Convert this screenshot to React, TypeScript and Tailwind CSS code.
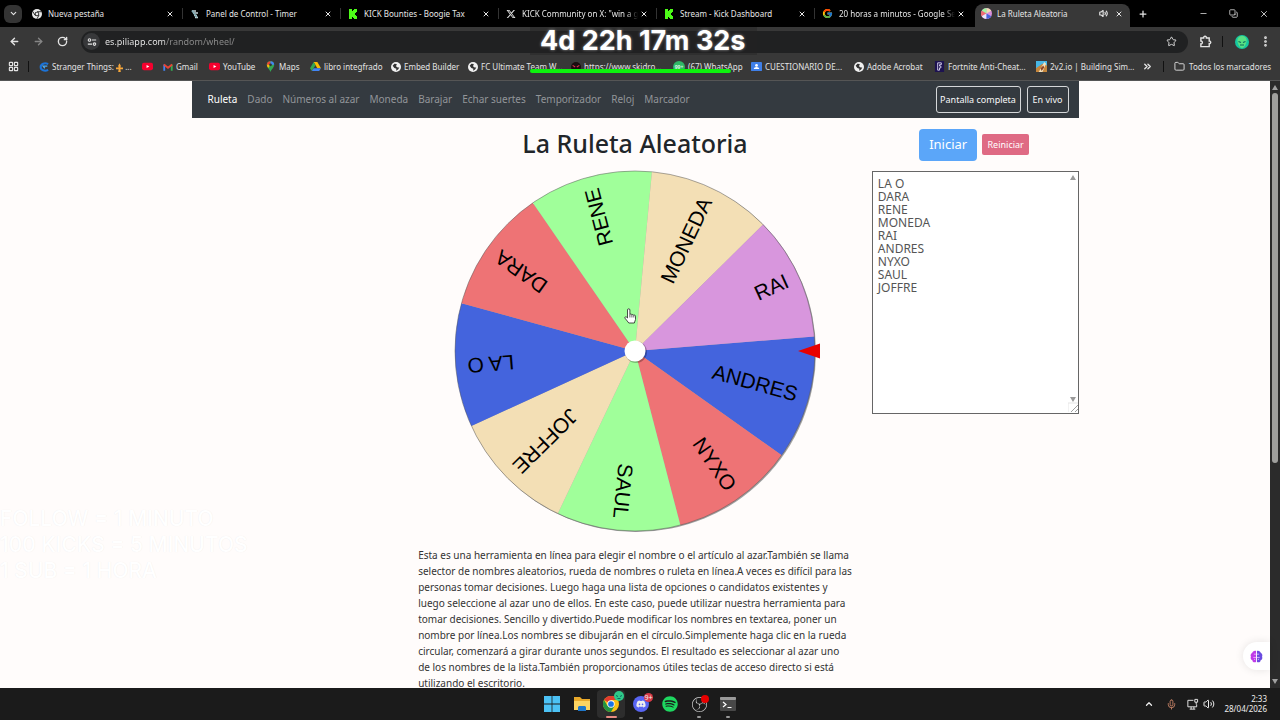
import { useState } from 'react';
import type { ReactNode } from 'react';
import clsx from 'clsx';
import {
  ArrowLeft,
  ArrowRight,
  ChevronDown,
  ChevronsRight,
  ChevronUp,
  Copy,
  EllipsisVertical,
  Folder,
  LayoutGrid,
  Mic,
  Minus,
  Plus,
  RotateCw,
  Star,
  Volume2,
  X,
} from 'lucide-react';
import { FaDiscord, FaSpotify, FaXTwitter } from 'react-icons/fa6';
import { FcGoogle } from 'react-icons/fc';
import { SiObsstudio } from 'react-icons/si';

const ChromeIcon = ({ mono = false, className }: { mono?: boolean; className?: string }) => (
  <svg viewBox="0 0 24 24" className={className}>
    <circle cx="12" cy="12" r="12" fill={mono ? '#e8e8e8' : '#fbc116'} />
    {!mono && <path d="M12 12 1.600 6A12 12 0 0 1 22.400 6H12z" fill="#e33b2e" />}
    {!mono && <path d="M1.600 6A12 12 0 0 0 12 24l5.200-9L12 12 6.800 15z" fill="#229342" />}
    {mono && <path d="M12 6.500h10.500M7.200 15 2 6M16.800 15 11.500 24" stroke="#111" strokeWidth="2" />}
    <circle cx="12" cy="12" r="5.500" fill={mono ? '#111' : '#fff'} />
    <circle cx="12" cy="12" r={mono ? 3.5 : 4.3} fill={mono ? '#e8e8e8' : '#1a73e8'} />
  </svg>
);

const KickIcon = () => (
  <svg viewBox="0 0 10 10" className="size-[10px]">
    <path d="M1 0h3v2h1V1h1V0h3v3H8v1H7v2h1v1h1v3H6V9H5V8H4v2H1z" fill="#4dfb18" />
  </svg>
);

const TimerIcon = () => (
  <svg viewBox="0 0 10 10" className="size-[10px]" fill="none">
    <path d="M2 2h4M3 4h5M4 6.500h3M5 8.500h3" stroke="#c7d6da" strokeWidth="1.600" />
    <path d="M2 1.500 7 8.500" stroke="#86aeb6" strokeWidth="1.800" />
  </svg>
);

const WheelIcon = () => (
  <svg viewBox="0 0 12 12" className="size-[11px]">
    <circle cx="6" cy="6" r="6" fill="#d98fdc" />
    <path d="M6 6V0a6 6 0 0 1 5.200 3z" fill="#f3deb3" />
    <path d="M6 6V0A6 6 0 0 0 .8 3z" fill="#a3f7a0" />
    <path d="M6 6 .8 3a6 6 0 0 0 0 6z" fill="#ee6f72" />
    <path d="M6 6 .8 9A6 6 0 0 0 6 12z" fill="#e9e9f9" />
    <path d="M6 6v6a6 6 0 0 0 5.200-3z" fill="#4464dd" />
  </svg>
);

const GlobeIcon = () => (
  <svg viewBox="0 0 12 12" className="size-[10px]">
    <circle cx="6" cy="6" r="6" fill="#f1f1f1" />
    <path d="M2 4.500 4 2l3 .5L6 5l2 1.500h2L8.500 9 6 10.500 6.500 8 4 7.200z" fill="#333" />
  </svg>
);

const YoutubeIcon = () => (
  <svg viewBox="0 0 12 12" className="size-[11px]">
    <rect y="2" width="12" height="8" rx="2" fill="#f5002e" />
    <path d="M5 4.300v3.400L8 6z" fill="#fff" />
  </svg>
);

const GmailIcon = () => (
  <svg viewBox="0 0 12 12" className="size-[10px]" fill="none" strokeWidth="2.200">
    <path d="M1.500 10.500V3" stroke="#4285f4" />
    <path d="M10.500 10.500V3" stroke="#34a853" />
    <path d="M1 3l5 4 5-4" stroke="#ea4335" />
  </svg>
);

const MapsIcon = () => (
  <svg viewBox="0 0 12 12" className="size-[11px]">
    <path d="M6 12C5 9 2 7.500 2 4.200A4 4 0 0 1 10 4.200C10 7.500 7 9 6 12z" fill="#34a853" />
    <path d="M2 4.200A4 4 0 0 1 6 .2V4z" fill="#ea4335" />
    <path d="M6 .2a4 4 0 0 1 4 4L6 4z" fill="#4285f4" />
    <path d="M2 4.200 6 4 3.500 7.600A6 6 0 0 1 2 4.200z" fill="#fbbc04" />
    <circle cx="6" cy="4.200" r="1.500" fill="#333" />
  </svg>
);

const DriveIcon = () => (
  <svg viewBox="0 0 12 12" className="size-[11px]">
    <path d="M4 1h4l4 7H8z" fill="#fbbc04" />
    <path d="M4 1l2 3.500L2 11 0 8z" fill="#34a853" />
    <path d="M4 8h8l-2 3H2z" fill="#4285f4" />
  </svg>
);

const SwirlIcon = () => (
  <svg viewBox="0 0 12 12" className="size-[10px]" fill="none" strokeWidth="2.500">
    <path d="M11 2.500C7 .5 2 2 2 6s5 5.500 9 3.500" stroke="#1b73d8" />
    <path d="M10 5H5l2 2.500" stroke="#4aa9f3" strokeWidth="1.500" />
  </svg>
);

const FleurIcon = () => (
  <svg viewBox="0 0 8 10" className="inline-block h-[9px] w-[7px]">
    <path d="M4 0l1.500 3L5 5h3v2H5l.500 3h-3L3 7H0V5h3l-.500-2z" fill="#f5a63b" />
  </svg>
);

const SkullIcon = () => (
  <svg viewBox="0 0 12 12" className="size-[10px]">
    <circle cx="6" cy="6" r="6" fill="#1a0c10" />
    <path d="M2 4l3 2M10 4 7 6M4 9h4" stroke="#d2344b" strokeWidth="1.300" />
  </svg>
);

const WhatsappIcon = () => (
  <svg viewBox="0 0 12 12" className="size-[12px]">
    <circle cx="6" cy="6" r="6" fill="#2fb866" />
    <text x="6" y="8" textAnchor="middle" fontSize="5" fontWeight="700" fill="#d9f5e3">
      99+
    </text>
  </svg>
);

const ClassroomIcon = () => (
  <svg viewBox="0 0 12 12" className="size-[11px]">
    <rect y="1" width="12" height="10" rx="1" fill="#3f7fe8" />
    <circle cx="6" cy="4.800" r="1.500" fill="#fff" />
    <path d="M3 8.800c0-3 6-3 6 0z" fill="#fff" />
  </svg>
);

const FortniteIcon = () => (
  <svg viewBox="0 0 12 12" className="size-[11px]">
    <rect x="1" width="10" height="12" fill="#1d1250" />
    <path d="M4 2h4v2H6v1.500h1.500v2H6V10H4z" fill="none" stroke="#e9e4ff" strokeWidth=".9" />
  </svg>
);

const BuildIcon = () => (
  <svg viewBox="0 0 12 12" className="size-[11px]">
    <rect width="12" height="12" fill="#48b7e6" />
    <path d="M0 12V8l7-5 5 2v7z" fill="#c5863c" />
    <path d="M3 12 9 1l2 2-4 9z" fill="#f3e3c0" />
    <path d="M5 8l3-3 1 2-3 4z" fill="#8c4426" />
  </svg>
);

const SiteIcon = () => (
  <svg viewBox="0 0 12 12" className="size-[10px]" fill="none" stroke="#e3e3e3" strokeWidth="1.300">
    <circle cx="3" cy="3.500" r="1.500" />
    <path d="M6 3.500h5M1 8.500h5" />
    <circle cx="9" cy="8.500" r="1.500" />
  </svg>
);

const ExtensionIcon = () => (
  <svg viewBox="0 0 14 14" className="size-[13px]" fill="none" stroke="#e3e3e3" strokeWidth="1.500">
    <path d="M2 3.200h3c-.3-2.400 3.300-2.400 3 0h3v3.300c2.200-.2 2.200 3 0 2.800v3.200H2V9.500c2.200.2 2.200-3.200 0-3z" />
  </svg>
);

const AlienIcon = () => (
  <svg viewBox="0 0 14 14" className="size-[14px]">
    <circle cx="7" cy="7" r="7" fill="#16c7a0" />
    <path d="M7 1c3.500 0 5 2.500 4.500 5.500S9 13 7 13 3 9.500 2.500 6.500 3.500 1 7 1z" fill="#58e083" />
    <path d="M3.500 6.500l2.500 1M10.500 6.500 8 7.500M5 10h4" stroke="#0b6b63" strokeWidth="1.200" />
  </svg>
);

const BrainIcon = () => (
  <svg viewBox="0 0 14 14" className="size-[13px]">
    <path d="M6.500 1v12C4 14 2.500 12.500 2.600 11 .8 10.500.3 8.500 1 7.200.2 5.500.9 3.800 2.300 3.300 2.500 1.300 5 .2 6.500 1z" fill="#c03be8" />
    <path d="M7.500 1v12c2.500 1 4-.5 3.900-2 1.800-.5 2.300-2.500 1.600-3.800.8-1.700.1-3.400-1.300-3.900C11.500 1.300 9 .2 7.500 1z" fill="#6a4be0" />
    <path d="M6.500 4.500H4.200M6.500 8H3.500M5 10.800V9.500M7.500 4.500h2.300M7.500 8h3M9 10.800V9.500" stroke="#f6c9ff" strokeWidth=".8" />
  </svg>
);

const NetworkIcon = () => (
  <svg viewBox="0 0 14 14" className="size-[13px]" fill="none" stroke="#eee">
    <path d="M8 2.500H2v7h9.500V7M4 12h6M5.500 9.500V12M8.500 9.500V12" />
    <path d="M9.500 1.500h3v3h-3zM11 4.500V7" />
  </svg>
);

const tabs = [
  { title: 'Nueva pestaña', icon: <ChromeIcon mono className="size-[10px]" /> },
  { title: 'Panel de Control - Timer', icon: <TimerIcon /> },
  { title: 'KICK Bounties - Boogie Tax', icon: <KickIcon /> },
  { title: 'KICK Community on X: "win a g', icon: <FaXTwitter className="size-[10px]" />, fade: true },
  { title: 'Stream - Kick Dashboard', icon: <KickIcon /> },
  { title: '20 horas a minutos - Google Se', icon: <FcGoogle className="size-[11px]" />, fade: true },
];

const bookmarks: { label: ReactNode; name?: string; icon: ReactNode; width: string }[] = [
  {
    label: (
      <>
        Stranger Things: <FleurIcon /> ...
      </>
    ),
    icon: <SwirlIcon />,
    width: 'w-[103px]',
  },
  { label: '', name: 'YouTube', icon: <YoutubeIcon />, width: 'w-[21px]' },
  { label: 'Gmail', icon: <GmailIcon />, width: 'w-[46px]' },
  { label: 'YouTube', icon: <YoutubeIcon />, width: 'w-[56px]' },
  { label: 'Maps', icon: <MapsIcon />, width: 'w-[45px]' },
  { label: 'libro integfrado', icon: <DriveIcon />, width: 'w-[81px]' },
  { label: 'Embed Builder', icon: <GlobeIcon />, width: 'w-[77px]' },
  { label: 'FC Ultimate Team W...', icon: <GlobeIcon />, width: 'w-[103px]' },
  { label: 'https://www.skidro...', icon: <SkullIcon />, width: 'w-[102px]' },
  { label: '(67) WhatsApp', icon: <WhatsappIcon />, width: 'w-[78px]' },
  { label: 'CUESTIONARIO DE...', icon: <ClassroomIcon />, width: 'w-[103px]' },
  { label: 'Adobe Acrobat', icon: <GlobeIcon />, width: 'w-[80px]' },
  { label: 'Fortnite Anti-Cheat...', icon: <FortniteIcon />, width: 'w-[102px]' },
  { label: '2v2.io | Building Sim...', icon: <BuildIcon />, width: 'w-[104px]' },
];

const navItems = [
  'Ruleta',
  'Dado',
  'Números al azar',
  'Moneda',
  'Barajar',
  'Echar suertes',
  'Temporizador',
  'Reloj',
  'Marcador',
];

const BLUE = '#4464dd';
const RED = '#ee7375';
const GREEN = '#a0ff9a';
const WHEAT = '#f3dfb5';
const PLUM = '#d896dd';

const slices = [
  { name: 'ANDRES', color: BLUE },
  { name: 'NYXO', color: RED },
  { name: 'SAUL', color: GREEN },
  { name: 'JOFFRE', color: WHEAT },
  { name: 'LA O', color: BLUE },
  { name: 'DARA', color: RED },
  { name: 'RENE', color: GREEN },
  { name: 'MONEDA', color: WHEAT },
  { name: 'RAI', color: PLUM },
];

const RADIUS = 180;
const START_ANGLE = -4.6;
const STEP = 360 / slices.length;

const pointAt = (angle: number) => {
  const rad = (angle * Math.PI) / 180;
  return `${RADIUS * Math.cos(rad)} ${RADIUS * Math.sin(rad)}`;
};

const Wheel = () => (
  <svg viewBox="-188 -181 376 364" className="h-[364px] w-[376px]">
    <circle cx="1" cy="1" r={RADIUS} fill="#a0a0a0" />
    {slices.map(({ name, color }, i) => {
      const from = START_ANGLE + i * STEP;
      return (
        <g key={name}>
          <path
            d={`M0 0L${pointAt(from)}A${RADIUS} ${RADIUS} 0 0 1 ${pointAt(from + STEP)}Z`}
            fill={color}
          />
          <text
            transform={`rotate(${from + STEP / 2})`}
            x="168"
            y="6"
            textAnchor="end"
            fontSize="21"
            className="font-['Liberation_Sans',sans-serif]"
          >
            {name}
          </text>
        </g>
      );
    })}
    <circle r={RADIUS} fill="none" stroke="#555" strokeOpacity="0.5" />
    <circle cx="1" cy="1" r="11" fill="#00000044" />
    <circle r="10.500" fill="#fff" />
    <path d="M163 0 185-7.500V7.500z" fill="#e80000" />
    {/* hand cursor */}
    <path
      transform="translate(-11 -43)"
      d="M3.500 10V2a1.200 1.200 0 0 1 2.400 0v4.500a1.100 1.100 0 0 1 2 .4 1.100 1.100 0 0 1 1.900.5 1 1 0 0 1 1.700.8v3.300l-1.200 3.500H4.800L1 10.200c-.6-1 .6-1.800 1.400-1.200z"
      fill="#fff"
      stroke="#222"
      strokeWidth=".8"
    />
    <path transform="translate(-11 -43)" d="M5.900 6.500v3M7.900 7v2.500M9.800 7.500v2" stroke="#222" strokeWidth=".7" />
  </svg>
);

const description = [
  'Esta es una herramienta en línea para elegir el nombre o el artículo al azar.También se llama',
  'selector de nombres aleatorios, rueda de nombres o ruleta en línea.A veces es difícil para las',
  'personas tomar decisiones. Luego haga una lista de opciones o candidatos existentes y',
  'luego seleccione al azar uno de ellos. En este caso, puede utilizar nuestra herramienta para',
  'tomar decisiones. Sencillo y divertido.Puede modificar los nombres en textarea, poner un',
  'nombre por línea.Los nombres se dibujarán en el círculo.Simplemente haga clic en la rueda',
  'circular, comenzará a girar durante unos segundos. El resultado es seleccionar al azar uno',
  'de los nombres de la lista.También proporcionamos útiles teclas de acceso directo si está',
  'utilizando el escritorio.',
];

const TabStrip = () => (
  <div className="flex h-[27px] items-stretch bg-black text-[8px] text-[#e6e6e6]">
    <div className="flex w-[25px] shrink-0 items-center pl-1">
      <button aria-label="Buscar pestañas" className="flex size-[18px] items-center justify-center rounded-md bg-[#343434]">
        <ChevronDown className="size-[9px]" strokeWidth={3} />
      </button>
    </div>
    {tabs.map(({ title, icon, fade }, i) => (
      <div key={title} className="flex w-[158px] min-w-0 items-center py-2">
        <div className="flex min-w-0 flex-1 items-center gap-[6px] pl-[7px]">
          <span className="shrink-0">{icon}</span>
          <span
            className={clsx('flex-1 overflow-hidden whitespace-nowrap', fade && 'mask-r-from-90%')}
          >
            {title}
          </span>
        </div>
        <button aria-label="Cerrar pestaña" className="mr-2 ml-[2px] shrink-0">
          <X className="size-[8px]" strokeWidth={3} />
        </button>
        {i < tabs.length - 1 && <span className="h-full w-px shrink-0 bg-[#333]" />}
      </div>
    ))}
    <div className="mt-1 ml-[2px] flex w-[155px] items-center gap-[5px] rounded-t-lg bg-[#383838] pb-1 pl-[6px]">
      <WheelIcon />
      <span className="flex-1 whitespace-nowrap">La Ruleta Aleatoria</span>
      <Volume2 className="size-[9px]" strokeWidth={3} />
      <button aria-label="Cerrar pestaña" className="mr-[7px] ml-[2px]">
        <X className="size-[8px]" strokeWidth={3} />
      </button>
    </div>
    <button aria-label="Nueva pestaña" className="ml-2">
      <Plus className="size-[10px]" strokeWidth={3} />
    </button>
    <div className="ml-auto flex items-center gap-[21px] pr-[11px]">
      <button aria-label="Minimizar">
        <Minus className="size-[9px]" />
      </button>
      <button aria-label="Restaurar">
        <Copy className="size-[9px] -scale-x-100 rotate-90" />
      </button>
      <button aria-label="Cerrar">
        <X className="size-[10px]" />
      </button>
    </div>
  </div>
);

const Toolbar = () => (
  <div className="flex h-[28px] items-center bg-[#383838] pt-px text-[#e3e3e3]">
    <div className="flex w-[81px] shrink-0 items-center gap-[13px] pl-[9px]">
      <button aria-label="Atrás">
        <ArrowLeft className="size-[11px]" strokeWidth={3} />
      </button>
      <button aria-label="Adelante" className="text-[#858585]">
        <ArrowRight className="size-[11px]" strokeWidth={3} />
      </button>
      <button aria-label="Recargar">
        <RotateCw className="size-[11px]" strokeWidth={3} />
      </button>
    </div>
    <div className="flex h-[22px] flex-1 items-center gap-[5px] rounded-full bg-[#202122] pr-[11px] pl-[2px]">
      <span className="flex size-[17px] items-center justify-center rounded-full bg-[#37383a]">
        <SiteIcon />
      </span>
      <input
        aria-label="Dirección"
        defaultValue="es.piliapp.com/random/wheel/"
        className="min-w-0 flex-1 bg-linear-to-r from-[#f0f0f0] from-[60px] to-[#8d8d8d] to-[60px] bg-clip-text text-[9px] text-transparent outline-none"
      />
      <Star className="size-[11px]" />
    </div>
    <div className="flex w-[92px] shrink-0 items-center pl-[11px]">
      <ExtensionIcon />
      <span className="ml-[10px] h-[11px] w-px bg-[#111]" />
      <span className="ml-[12px]">
        <AlienIcon />
      </span>
      <EllipsisVertical className="ml-[10px] size-[13px]" strokeWidth={3} />
    </div>
  </div>
);

const Bookmarks = () => (
  <div className="flex h-[26px] items-center border-b border-[#555] bg-[#383838] pr-[9px] pb-[2px] pl-2 text-[8px] text-[#e3e3e3]">
    <LayoutGrid className="size-[11px] shrink-0" strokeWidth={2.5} />
    <span className="mr-[10px] ml-[9px] h-[11px] w-px shrink-0 bg-[#111]" />
    {bookmarks.map(({ label, name, icon, width }, i) => (
      <a
        key={i}
        href="#"
        aria-label={name}
        className={clsx('flex shrink-0 items-center gap-[3px] whitespace-nowrap', width)}
      >
        <span className="shrink-0">{icon}</span>
        {label && <span>{label}</span>}
      </a>
    ))}
    <ChevronsRight className="ml-auto size-[11px]" strokeWidth={3} />
    <span className="mx-[10px] h-[11px] w-px bg-[#111]" />
    <a href="#" className="flex items-center gap-1 whitespace-nowrap">
      <Folder className="size-[11px]" />
      Todos los marcadores
    </a>
  </div>
);

const Countdown = () => (
  <div className="pointer-events-none absolute top-[27px] left-[530px] w-[227px]">
    <div className="bg-[#222]/40 pl-[10px] font-['Inter',sans-serif] text-[27px] leading-[28px] font-bold whitespace-nowrap text-white [text-shadow:0_0_3px_#ffffff88]">
      4d 22h 17m 32s
    </div>
    <div className="mt-[14px] h-1 w-[201px] rounded-full bg-[#0df20d]" />
  </div>
);

const Scrollbar = () => (
  <div className="flex w-[10px] shrink-0 flex-col items-center bg-[#2b2b2b] py-1">
    <svg viewBox="0 0 6 5" className="h-[5px] w-[6px]">
      <path d="M3 0l3 5H0z" fill="#a0a0a0" />
    </svg>
    <span className="mt-[3px] h-[370px] w-[6px] rounded-full bg-[#9f9f9d]" />
    <svg viewBox="0 0 6 5" className="mt-auto h-[5px] w-[6px]">
      <path d="M3 5l3-5H0z" fill="#a0a0a0" />
    </svg>
  </div>
);

const Taskbar = () => (
  <div className="grid h-8 shrink-0 grid-cols-[1fr_auto_1fr] items-center bg-[#1b1b1b] text-[8px] text-[#eee]">
    <span />
    <div className="flex items-center gap-px">
      <button aria-label="Inicio" className="flex size-[28px] items-center justify-center">
        <svg viewBox="0 0 16 16" className="size-[16px]">
          <path d="M0 0h7.600v7.600H0zM8.400 0H16v7.600H8.400zM0 8.400h7.600V16H0zM8.400 8.400H16V16H8.400z" fill="#4cc2f5" />
        </svg>
      </button>
      <button aria-label="Explorador" className="flex size-[29px] items-center justify-center">
        <svg viewBox="0 0 16 16" className="size-[16px]">
          <path d="M0 1h6l2 2h8v11H0z" fill="#e9a92a" />
          <path d="M0 5h16v9H0z" fill="#fcd462" />
          <path d="M4 15v-4l1-1h6l1 1v4z" fill="#1f77c9" />
        </svg>
      </button>
      <button
        aria-label="Chrome"
        className="relative flex size-[28px] items-center justify-center rounded bg-[#2d2d2d]"
      >
        <ChromeIcon className="size-[16px]" />
        <svg viewBox="0 0 10 10" className="absolute top-px right-px size-[10px]">
          <circle cx="5" cy="5" r="5" fill="#2fc98a" />
          <path d="M2 4.500l2 1M8 4.500l-2 1M3.500 7.500h3" stroke="#0b6b63" />
        </svg>
        <span className="absolute bottom-0 h-[2px] w-[11px] rounded-full bg-[#e98b83]" />
      </button>
      <button aria-label="Discord" className="relative flex size-[29px] items-center justify-center">
        <span className="flex size-[16px] items-center justify-center rounded-full bg-[#5865f2]">
          <FaDiscord className="size-[10px]" />
        </span>
        <span className="absolute top-[3px] right-[2px] size-[9px] rounded-full bg-[#d83a48] text-[7px] leading-[9px]">
          9+
        </span>
        <span className="absolute bottom-0 h-[2px] w-1 rounded-full bg-[#999]" />
      </button>
      <button aria-label="Spotify" className="flex size-[28px] items-center justify-center">
        <FaSpotify className="size-[16px] text-[#1ed760]" />
      </button>
      <button aria-label="OBS" className="relative flex size-[28px] items-center justify-center">
        <SiObsstudio className="size-[15px] text-[#d0d0d0]" />
        <span className="absolute top-[5px] right-[4px] size-[8px] rounded-full bg-[#e80000]" />
        <span className="absolute bottom-0 h-[2px] w-1 rounded-full bg-[#999]" />
      </button>
      <button aria-label="Terminal" className="relative flex size-[28px] items-center justify-center">
        <svg viewBox="0 0 16 14" className="h-[14px] w-[16px]">
          <rect width="16" height="14" rx="1" fill="#484848" />
          <rect width="16" height="3" rx="1" fill="#9a9a9a" />
          <path d="M3 5l3 2.500L3 10M7.500 10.500h4" fill="none" stroke="#fff" strokeWidth="1.200" />
        </svg>
        <span className="absolute bottom-0 h-[2px] w-1 rounded-full bg-[#999]" />
      </button>
    </div>
    <div className="flex items-center justify-end pr-[13px]">
      <ChevronUp className="mr-3 size-[10px]" strokeWidth={3} />
      <Mic className="mr-[9px] size-[11px] text-[#c98468]" />
      <span className="mr-1">
        <NetworkIcon />
      </span>
      <Volume2 className="mr-[9px] size-[12px]" />
      <div className="text-right leading-[10px]">
        <div>2:33</div>
        <div>28/04/2026</div>
      </div>
    </div>
  </div>
);

const App = () => {
  const [names, setNames] = useState<string>(
    'LA O\nDARA\nRENE\nMONEDA\nRAI\nANDRES\nNYXO\nSAUL\nJOFFRE',
  );

  return (
    <div className="relative flex h-screen flex-col overflow-hidden bg-[#fffcfb] font-['Noto_Sans',sans-serif]">
      <header>
        <TabStrip />
        <Toolbar />
        <Bookmarks />
      </header>

      <div className="flex min-h-0 flex-1">
        <main className="min-w-0 flex-1 overflow-hidden">
          <div className="mx-auto max-w-[887px]">
            <nav className="flex h-[37px] items-center gap-[10px] bg-[#343a40] pr-[10px] pl-4 text-[10px] whitespace-nowrap">
              {navItems.map((item, i) => (
                <a key={item} href="#" className={i === 0 ? 'text-white' : 'text-[#929599]'}>
                  {item}
                </a>
              ))}
              <div className="ml-auto flex gap-[6px] text-[9px] text-[#f8f9fa]">
                <button className="h-[27px] w-[85px] rounded-[3px] border border-[#d5d7d9]">
                  Pantalla completa
                </button>
                <button className="h-[27px] w-[42px] rounded-[3px] border border-[#d5d7d9]">
                  En vivo
                </button>
              </div>
            </nav>

            <div className="grid grid-cols-[1fr_2fr_1fr]">
              <div />
              <div className="px-[5px]">
                <h1 className="pt-2 text-center text-[25px] leading-[34px] font-medium text-[#212529]">
                  La Ruleta Aleatoria
                </h1>
                <div className="flex justify-center pt-[10px]">
                  <Wheel />
                </div>
                <p className="pt-[13px] text-[10px] leading-[16px] whitespace-nowrap text-[#333]">
                  {description.map((line) => (
                    <span key={line} className="block">
                      {line}
                    </span>
                  ))}
                </p>
              </div>
              <div className="pl-[15px]">
                <div className="flex h-[53px] items-center justify-center gap-[5px] pr-[2px] text-white">
                  <button className="h-8 w-[58px] rounded bg-[#5ba6f9] text-[13px]">Iniciar</button>
                  <button className="h-[21px] w-[47px] rounded-[2px] bg-[#df6a84] text-[9px]">
                    Reiniciar
                  </button>
                </div>
                <div className="relative">
                  <textarea
                    aria-label="Nombres"
                    value={names}
                    onChange={(e) => setNames(e.target.value)}
                    className="block h-[243px] w-full resize-none border border-[#666] bg-white px-[5px] py-[5px] text-[12px] leading-[13px] text-[#555] outline-none [scrollbar-width:none]"
                  />
                  <svg
                    viewBox="0 0 10 240"
                    className="pointer-events-none absolute top-px right-px h-[240px] w-[10px]"
                  >
                    <path d="M5 3l3 5H2zM5 230l3-5H2z" fill="#9a9a9a" />
                    <path d="M3 240l7-7M7 240l3-3" stroke="#888" strokeWidth=".8" />
                    <path d="M0 240v-9h10" stroke="#e5e5e5" fill="none" />
                  </svg>
                </div>
              </div>
            </div>
          </div>
        </main>
        <Scrollbar />
      </div>

      <Taskbar />

      <Countdown />
      {/* stream overlay, white on the almost white page */}
      <div className="pointer-events-none absolute top-[507px] left-0 space-y-[2px] font-['Inter',sans-serif] text-[21px] leading-[24px] font-medium whitespace-nowrap text-white [text-shadow:0_0_1px_#00000014]">
        <div>FOLLOW = 1 MINUTO</div>
        <div>100 KICKS = 5 MINUTOS</div>
        <div>1 SUB = 1 HORA</div>
      </div>
      <button
        aria-label="Asistente"
        className="absolute right-[10px] bottom-[50px] flex h-[28px] w-[27px] items-center justify-center rounded-l-full bg-white shadow-[0_0_8px_#0000001a]"
      >
        <BrainIcon />
      </button>
    </div>
  );
};

export default App;
